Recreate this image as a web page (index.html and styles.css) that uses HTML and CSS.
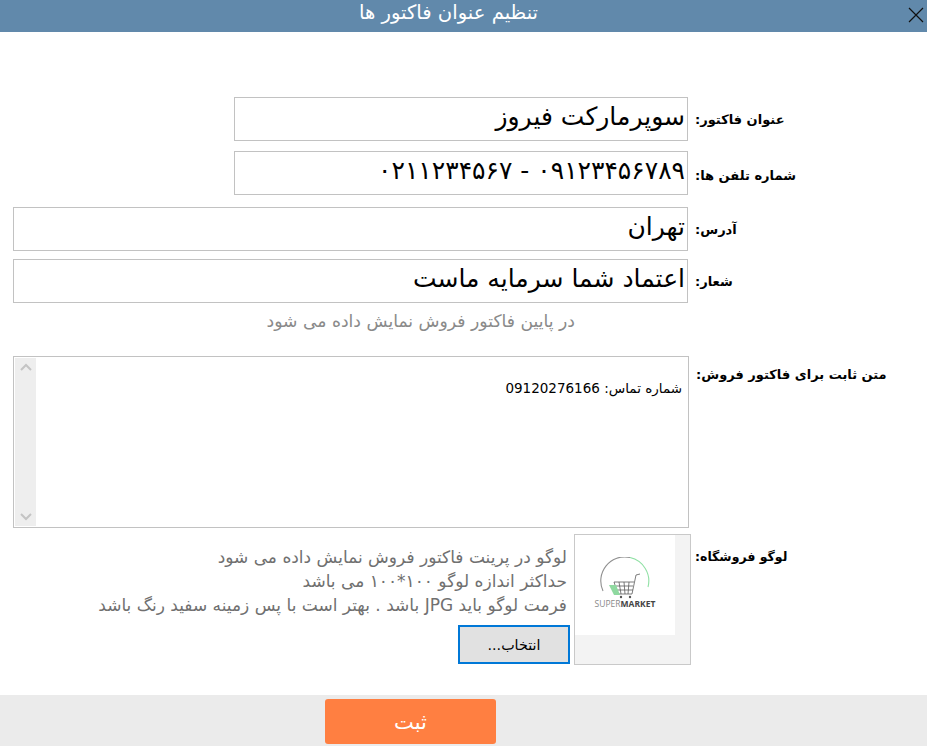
FILE: index.html
```html
<!DOCTYPE html>
<html lang="fa">
<head>
<meta charset="utf-8">
<title>تنظیم عنوان فاکتور ها</title>
<link rel="stylesheet" href="styles.css">
</head>
<body>
<div class="window">
  <header class="titlebar">
    <h1 class="title">تنظیم عنوان فاکتور ها</h1>
    <svg class="close" width="16" height="16" viewBox="0 0 16 16"><path d="M1 1 L15 15 M15 1 L1 15" stroke="#111" stroke-width="1.2" fill="none"/></svg>
  </header>
  <main class="form">
    <div class="row row-short">
      <div class="field">سوپرمارکت فیروز</div>
      <label class="label">عنوان فاکتور:</label>
    </div>
    <div class="row row-short row-gap-2">
      <div class="field">۰۹۱۲۳۴۵۶۷۸۹ - ۰۲۱۱۲۳۴۵۶۷</div>
      <label class="label label-phone">شماره تلفن ها:</label>
    </div>
    <div class="row row-gap-3">
      <div class="field">تهران</div>
      <label class="label">آدرس:</label>
    </div>
    <div class="row row-gap-4">
      <div class="field">اعتماد شما سرمایه ماست</div>
      <label class="label">شعار:</label>
    </div>
    <p class="hint">در پایین فاکتور فروش نمایش داده می شود</p>
    <div class="row row-text">
      <div class="textarea">
        <div class="scrollbar">
          <svg width="12" height="8" viewBox="0 0 12 8"><path d="M1 7 L6 2 L11 7" stroke="#c4c4c4" stroke-width="2" fill="none"/></svg>
          <svg width="12" height="8" viewBox="0 0 12 8"><path d="M1 1 L6 6 L11 1" stroke="#c4c4c4" stroke-width="2" fill="none"/></svg>
        </div>
        <div class="textarea-text">شماره تماس: 09120276166</div>
      </div>
      <label class="label label-text">متن ثابت برای فاکتور فروش:</label>
    </div>
    <div class="row row-logo">
      <div class="logo-notes">
        <p class="note">لوگو در پرینت فاکتور فروش نمایش داده می شود</p>
        <p class="note">حداکثر اندازه لوگو ۱۰۰*۱۰۰ می باشد</p>
        <p class="note">فرمت لوگو باید JPG باشد . بهتر است با پس زمینه سفید رنگ باشد</p>
        <button class="pick" type="button">انتخاب...</button>
      </div>
      <div class="logo-box">
        <div class="logo-img">
          <svg class="logo-mark" width="56" height="42" viewBox="0 0 56 42">
            <path d="M6 34 A24 24 0 0 1 33 0.5" stroke="#8f8f8f" stroke-width="1.1" fill="none"/>
            <path d="M33 0.5 A24 24 0 0 1 51 30" stroke="#8fe0a4" stroke-width="1.1" fill="none"/>
            <path d="M43 17 L39 18 L35 37 L21 37 L17 25 L37 25 M19 29 L36 29 M20 33 L36 33 M22 25 L24 37 M27 25 L28 37 M32 25 L31 37" stroke="#5c5c5c" stroke-width="0.8" fill="none"/>
            <path d="M12 28 L19 28 L23 38 L17 38 Z" fill="#8fd9a0"/>
            <circle cx="24" cy="40" r="1.2" fill="#555"/><circle cx="33" cy="40" r="1.2" fill="#555"/>
          </svg>
          <div class="logo-word"><span class="thin">SUPER</span><b class="strong">MARKET</b></div>
        </div>
      </div>
      <label class="label label-logo">لوگو فروشگاه:</label>
    </div>
  </main>
  <footer class="footer">
    <button class="save" type="button">ثبت</button>
  </footer>
</div>
</body>
</html>
```
FILE: styles.css
```css
* { box-sizing: border-box; }
html, body { margin: 0; padding: 0; background: #fff; }
body { font-family: "DejaVu Sans", sans-serif; color: #000; }
.window { width: 927px; height: 746px; display: flex; flex-direction: column; overflow: hidden; }

.titlebar { height: 32px; background: #6189ab; flex: none; display: flex; justify-content: space-between; align-items: flex-start; }
.title { margin: 0; width: 897px; text-align: center; direction: rtl; color: #fff; font-size: 19.6px; font-weight: normal; line-height: 26px; }
.close { margin: 7px 3px 0 0; }

.form { flex: 1; padding-top: 65px; display: flex; flex-direction: column; }
.row { display: flex; padding-left: 13px; }
.row-short { padding-left: 234px; }
.row-gap-2 { margin-top: 10px; }
.row-gap-3 { margin-top: 12px; }
.row-gap-4 { margin-top: 8px; }

.field { flex: none; height: 44px; width: 675px; border: 1px solid #c2c2c2; direction: rtl; padding-right: 2px; font-size: 25px; line-height: 38px; white-space: nowrap; }
.row-short .field { width: 454px; }
.label { height: 44px; margin-left: 7px; direction: rtl; font-size: 13px; font-weight: bold; line-height: 46px; white-space: nowrap; }
.label-phone { line-height: 49px; }
.label-text { line-height: 38px; }
.label-logo { margin-left: 4px; font-size: 12.5px; line-height: 46px; }

.hint { margin: 8px 0 0; width: 688px; height: 20px; padding-right: 113px; direction: rtl; color: #8a8a8a; font-size: 17.2px; line-height: 20px; white-space: nowrap; }

.row-text { margin-top: 25px; }
.textarea { width: 676px; height: 172px; border: 1px solid #c2c2c2; display: flex; padding: 1px; }
.scrollbar { width: 21px; height: 100%; background: #eeeeee; display: flex; flex-direction: column; justify-content: space-between; align-items: center; padding: 5px 0; }
.textarea-text { flex: 1; direction: rtl; padding: 20px 5px 0 0; font-size: 13.5px; line-height: 20px; }

.row-logo { margin-top: 6px; padding-left: 0; }
.logo-notes { width: 570px; display: flex; flex-direction: column; align-items: flex-end; padding-top: 11px; }
.note { margin: 0 3px 0 0; direction: rtl; color: #707070; font-size: 17px; line-height: 24px; white-space: nowrap; }
.pick { margin-top: 8px; width: 112px; height: 39px; border: 2px solid #0078d7; background: #e1e1e1; direction: rtl; font-family: inherit; font-size: 14.3px; padding: 0; }
.logo-box { margin-left: 4px; width: 117px; height: 131px; border: 1px solid #c9c9c9; background: #f3f3f3; }
.logo-img { width: 100px; height: 100px; background: #fff; display: flex; flex-direction: column; align-items: center; padding-top: 22px; }
.logo-word { font-family: "Open Sans", sans-serif; font-size: 8.5px; line-height: 10px; color: #8a8a8a; white-space: nowrap; }
.thin { font-weight: normal; }
.strong { color: #444; }

.footer { height: 51px; flex: none; background: #ebebeb; padding: 4px 0 0 325px; }
.save { width: 171px; height: 45px; border: none; border-radius: 3px; background: #ff7f41; color: #fff; font-family: inherit; font-size: 21px; padding: 0; }
```
